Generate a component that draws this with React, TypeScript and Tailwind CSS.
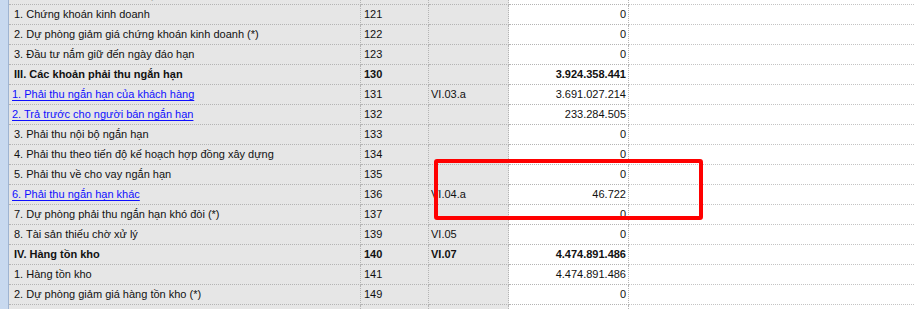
type Row = {
  name: string;
  code: string;
  note?: string;
  value?: string;
  bold?: boolean;
  link?: boolean;
};

const ROWS: Row[] = [
  { name: "II. Đầu tư tài chính ngắn hạn", code: "", value: "", bold: true },
  { name: "1. Chứng khoán kinh doanh", code: "121", value: "0" },
  { name: "2. Dự phòng giảm giá chứng khoán kinh doanh (*)", code: "122", value: "0" },
  { name: "3. Đầu tư nắm giữ đến ngày đáo hạn", code: "123", value: "0" },
  { name: "III. Các khoản phải thu ngắn hạn", code: "130", value: "3.924.358.441", bold: true },
  { name: "1. Phải thu ngắn hạn của khách hàng", code: "131", note: "VI.03.a", value: "3.691.027.214", link: true },
  { name: "2. Trả trước cho người bán ngắn hạn", code: "132", value: "233.284.505", link: true },
  { name: "3. Phải thu nội bộ ngắn hạn", code: "133", value: "0" },
  { name: "4. Phải thu theo tiến độ kế hoạch hợp đồng xây dựng", code: "134", value: "0" },
  { name: "5. Phải thu về cho vay ngắn hạn", code: "135", value: "0" },
  { name: "6. Phải thu ngắn hạn khác", code: "136", note: "VI.04.a", value: "46.722", link: true },
  { name: "7. Dự phòng phải thu ngắn hạn khó đòi (*)", code: "137", value: "0" },
  { name: "8. Tài sản thiếu chờ xử lý", code: "139", note: "VI.05", value: "0" },
  { name: "IV. Hàng tồn kho", code: "140", note: "VI.07", value: "4.474.891.486", bold: true },
  { name: "1. Hàng tồn kho", code: "141", value: "4.474.891.486" },
  { name: "2. Dự phòng giảm giá hàng tồn kho (*)", code: "149", value: "0" },
  { name: "", code: "", value: "" },
];

export default function App() {
  return (
    <div
      className="relative w-[914px] h-[309px] overflow-hidden bg-white text-[11px] text-[#111]"
      style={{ fontFamily: '"Liberation Sans", Arial, sans-serif' }}
    >
      <div className="-mt-[15px]">
        {ROWS.map((r, i) => (
          <div key={i} className="flex h-[20px] leading-[19px]">
            {/* row header strip */}
            <div className="w-[9px] shrink-0 bg-[#c8d9ef] border-r border-[#9fb4d1]" />
            <div
              className={`w-[352px] shrink-0 bg-[#e6e6e6] border-r border-b border-dotted border-[#b4b4b4] whitespace-nowrap overflow-hidden ${r.link ? "pl-[3px]" : "pl-[5px]"} ${r.bold ? "font-bold" : ""}`}
            >
              {r.link ? (
                <span className="text-[#1010ff] underline underline-offset-[2px]">{r.name}</span>
              ) : (
                r.name
              )}
            </div>
            <div
              className={`w-[68px] shrink-0 bg-[#e6e6e6] border-r border-b border-dotted border-[#b4b4b4] pl-[3px] ${r.bold ? "font-bold" : ""}`}
            >
              {r.code}
            </div>
            <div
              className={`w-[80px] shrink-0 bg-[#e6e6e6] border-r border-b border-dotted border-[#b4b4b4] pl-[2px] ${r.bold ? "font-bold" : ""}`}
            >
              {r.note}
            </div>
            <div
              className={`w-[120px] shrink-0 bg-white border-r border-b border-dotted border-[#b4b4b4] text-right pr-[2px] ${r.bold ? "font-bold" : ""}`}
            >
              {r.value}
            </div>
            <div className="flex-1 bg-white border-b border-dotted border-[#c4c4c4]" />
          </div>
        ))}
      </div>

      {/* red highlight annotation */}
      <div className="absolute left-[434px] top-[159px] w-[269px] h-[61px] border-4 border-[#ff0000] rounded-[3px]" />
    </div>
  );
}
